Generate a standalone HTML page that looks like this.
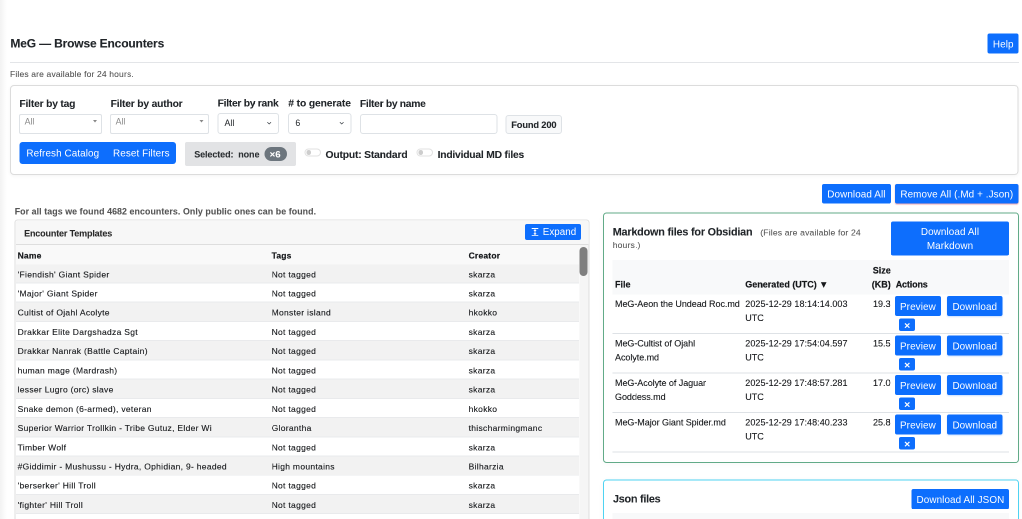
<!DOCTYPE html>
<html lang="en">
<head>
<meta charset="utf-8">
<title>MeG — Browse Encounters</title>
<style>
*{box-sizing:border-box;margin:0;padding:0}
html,body{width:1022px;height:519px;overflow:hidden;background:#fff}
body{position:relative;font-family:"Liberation Sans",Arial,sans-serif;color:#212529;font-size:18px;-webkit-font-smoothing:antialiased}
.abs{position:absolute}
.t{position:absolute;white-space:nowrap;line-height:1}
.b{font-weight:700;-webkit-text-stroke:0.16px}
.edge{left:0;top:0;width:14px;height:1038px;background:linear-gradient(to right,#f3f3f3 0,#f8f8f8 40%,#fdfdfd 80%,#fff 100%)}
.btn{position:absolute;background:#0d6efd;color:#fff;border-radius:4px;text-align:center;white-space:nowrap;font-size:19.8px;letter-spacing:0.18px;line-height:1}
.btn.sh{box-shadow:0 2px 3px rgba(13,110,253,.22)}
.btn span{position:absolute;left:0;right:0;white-space:nowrap}
h1{-webkit-text-stroke:0.2px #212529;font-size:24px;font-weight:700;left:20.8px;top:75px;letter-spacing:-0.32px}
.hr{left:20px;top:124px;width:2018px;height:2px;background:#e3e5e8}
.small{font-size:17px;color:#4e4e4e;-webkit-text-stroke:0.12px #4e4e4e;letter-spacing:0.32px}
.card{position:absolute;border:2px solid #dcdcdc;border-radius:8px;background:#fff}
.lbl{font-size:20.6px;font-weight:700;color:#212529;-webkit-text-stroke:0.12px #212529;letter-spacing:-0.38px}
.sel{position:absolute;border:2px solid #dee2e6;border-radius:4px;background:#fff;height:40px}
.sel .v{position:absolute;white-space:nowrap;line-height:1}
/* left table */
.lt{position:absolute;left:31.2px;top:489.8px;width:1127.2px}
.lt .r{position:relative;height:38.44px;border-bottom:2px solid #e9eaec}
.lt .r.h{height:38.8px;border-bottom:0;background:#f9f9f9;font-weight:700}
.lt .r.h span{top:13px;letter-spacing:0.4px;-webkit-text-stroke:0.4px #16181b}
.lt .r.o{background:#f2f2f2}
.lt .r span{position:absolute;top:12px;color:#16181b;-webkit-text-stroke:0.24px #16181b;line-height:1;white-space:nowrap;font-size:17px;letter-spacing:0.6px}
.lt .r .a{left:4px}.lt .r .c{left:512px}.lt .r .d{left:906px}
/* right table */
.rt{position:absolute;left:1225px;top:520px;width:793px}
.rt .h{position:relative;height:69px;background:#f8f9fa;font-weight:700}
.rt .h span.x{-webkit-text-stroke:0.36px #16181b}
.rt .r{position:relative;height:79.04px;border-bottom:2px solid #dee2e6}
.rt span.x{position:absolute;white-space:nowrap;line-height:1;font-size:18px;color:#16181b;-webkit-text-stroke:0.2px #16181b}
</style>
</head>
<body>
<div class="abs" style="left:0;top:0;width:2044px;height:1038px;will-change:transform;transform:scale(.5);transform-origin:0 0">
<div class="abs edge"></div>

<h1 class="t">MeG — Browse Encounters</h1>
<div class="btn" style="left:1975px;top:67px;width:62.4px;height:40px"><span style="top:11.6px;left:0.5px">Help</span></div>
<div class="abs hr"></div>
<div class="t small" style="left:20px;top:140px">Files are available for 24 hours.</div>

<!-- filter card -->
<div class="card" style="left:20px;top:170px;width:2017.2px;height:180px;box-shadow:0 2px 8px rgba(0,0,0,.05)"></div>
<div class="t lbl" style="left:38.8px;top:197.2px">Filter by tag</div>
<div class="t lbl" style="left:221.2px;top:197.2px">Filter by author</div>
<div class="t lbl" style="left:435.2px;top:196.4px;letter-spacing:-0.54px">Filter by rank</div>
<div class="t lbl" style="left:576.6px;top:196.4px;letter-spacing:-0.24px"># to generate</div>
<div class="t lbl" style="left:719.8px;top:197.2px;letter-spacing:-0.6px">Filter by name</div>

<div class="sel" style="left:38px;top:228px;width:166px;height:40px"><span class="v" style="left:9.2px;top:4.8px;font-size:17.6px;color:#8a8a8a">All</span><span class="abs" style="right:8.4px;top:9.8px;border:4px solid transparent;border-top:5px solid #888;width:0;height:0"></span></div>
<div class="sel" style="left:220px;top:228px;width:198px;height:40px"><span class="v" style="left:9.2px;top:4.8px;font-size:17.6px;color:#8a8a8a">All</span><span class="abs" style="right:8.8px;top:9.8px;border:4px solid transparent;border-top:5px solid #888;width:0;height:0"></span></div>
<div class="sel" style="left:434.6px;top:226px;width:123.2px;height:42px;border-radius:6px"><span class="v" style="left:12.4px;top:10.4px;font-size:17.6px;color:#212529">All</span>
<svg class="abs" style="right:13.2px;top:14.2px" width="8.8" height="8.8" viewBox="0 0 16 16"><path d="M2 5l6 6 6-6" fill="none" stroke="#343a40" stroke-width="2.4" stroke-linecap="round" stroke-linejoin="round"/></svg></div>
<div class="sel" style="left:576.4px;top:226px;width:126.4px;height:42px;border-radius:6px"><span class="v" style="left:12.4px;top:10.4px;font-size:17.6px;color:#212529">6</span>
<svg class="abs" style="right:13.2px;top:14.2px" width="8.8" height="8.8" viewBox="0 0 16 16"><path d="M2 5l6 6 6-6" fill="none" stroke="#343a40" stroke-width="2.4" stroke-linecap="round" stroke-linejoin="round"/></svg></div>
<div class="sel" style="left:719.6px;top:228px;width:275.6px;height:39.6px;border-radius:6px"></div>
<div class="abs" style="left:1011.4px;top:230px;width:112.4px;height:38px;border:2px solid #dee2e6;border-radius:6px;background:#f8f9fa"><span class="t b" style="left:9.2px;top:8.8px;font-size:18.6px;letter-spacing:-0.32px">Found 200</span></div>

<div class="btn" style="left:38.8px;top:284px;width:313.4px;height:44px;border-radius:6px;text-align:left"><span style="left:14px;top:12.6px">Refresh Catalog</span><span style="left:187.2px;top:12.6px">Reset Filters</span></div>
<div class="abs" style="left:370px;top:284px;width:222px;height:48px;background:#e2e3e5;border-radius:4px"></div>
<div class="t b" style="left:388.4px;top:299.8px;font-size:18px;letter-spacing:-0.18px;color:#2b2f32">Selected:&nbsp; none</div>
<div class="abs" style="left:528.8px;top:294.4px;width:45.2px;height:28px;border-radius:14px;background:#6c757d"></div>
<div class="t b" style="left:539.2px;top:298.8px;font-size:19.2px;color:#fff">×6</div>

<div class="abs" style="left:608.8px;top:296.8px;width:32.8px;height:16.6px;border:2px solid #e2e2e2;border-radius:8.4px;background:#fff"><span class="abs" style="left:2px;top:1.6px;width:9.2px;height:9.2px;border-radius:50%;background:#cdcdcd"></span></div>
<div class="t b" style="left:651px;top:299px;font-size:20.6px;letter-spacing:-0.34px">Output: Standard</div>
<div class="abs" style="left:833.2px;top:296.8px;width:32.8px;height:16.6px;border:2px solid #e2e2e2;border-radius:8.4px;background:#fff"><span class="abs" style="left:2px;top:1.6px;width:9.2px;height:9.2px;border-radius:50%;background:#cdcdcd"></span></div>
<div class="t b" style="left:875.2px;top:299px;font-size:20.6px;letter-spacing:-0.42px">Individual MD files</div>

<div class="btn" style="left:1644px;top:368px;width:137.6px;height:39.2px"><span style="top:11.4px">Download All</span></div>
<div class="btn" style="left:1790px;top:368px;width:247.2px;height:39.2px;box-shadow:0 1.2px 2.4px rgba(220,53,69,.45)"><span style="top:11.4px">Remove All (.Md + .Json)</span></div>

<!-- left panel -->
<div class="t b" style="left:29.4px;top:415.2px;font-size:17.6px;letter-spacing:0.18px;color:#555">For all tags we found 4682 encounters. Only public ones can be found.</div>
<div class="card" style="left:29.2px;top:438.8px;width:1150px;height:640px;border-color:#dedede;border-radius:6px;background:#fff"></div>
<div class="abs" style="left:31.2px;top:440.8px;width:1146px;height:49px;background:#f7f7f7;border-bottom:2px solid #dedede;border-radius:6px 6px 0 0"></div>
<div class="t b" style="left:48.2px;top:458px;font-size:18px;letter-spacing:-0.3px;color:#2a2a2a">Encounter Templates</div>
<div class="btn" style="left:1050px;top:448px;width:112px;height:32.4px;text-align:left"><svg class="abs" style="left:13px;top:8px" width="14" height="16.4" viewBox="0 0 7 8.2"><path d="M0.2 0.5H6.8M0.2 7.7H6.8M3.5 1.4V6.8" stroke="#fff" stroke-width="0.9" fill="none"/><path d="M3.5 1.1L5.1 3H1.9ZM3.5 7.1L5.1 5.2H1.9Z" fill="#fff"/></svg><span style="left:35.6px;top:6.2px;font-size:19.6px;letter-spacing:0.06px">Expand</span></div>

<div class="abs" style="left:1158.4px;top:490px;width:18.8px;height:560px;background:#f5f5f5;border-left:2px solid #f9f9f9"></div>
<div class="abs" style="left:1158.6px;top:493.6px;width:16px;height:58.8px;border-radius:8px;background:#7f7f7f"></div>

<div class="lt">
<div class="r h"><span class="a">Name</span><span class="c">Tags</span><span class="d">Creator</span></div>
<div class="r o f"><span class="a">'Fiendish' Giant Spider</span><span class="c">Not tagged</span><span class="d">skarza</span></div>
<div class="r"><span class="a">'Major' Giant Spider</span><span class="c">Not tagged</span><span class="d">skarza</span></div>
<div class="r o"><span class="a">Cultist of Ojahl Acolyte</span><span class="c">Monster island</span><span class="d">hkokko</span></div>
<div class="r"><span class="a">Drakkar Elite Dargshadza Sgt</span><span class="c">Not tagged</span><span class="d">skarza</span></div>
<div class="r o"><span class="a">Drakkar Nanrak (Battle Captain)</span><span class="c">Not tagged</span><span class="d">skarza</span></div>
<div class="r"><span class="a">human mage (Mardrash)</span><span class="c">Not tagged</span><span class="d">skarza</span></div>
<div class="r o"><span class="a">lesser Lugro (orc) slave</span><span class="c">Not tagged</span><span class="d">skarza</span></div>
<div class="r"><span class="a">Snake demon (6-armed), veteran</span><span class="c">Not tagged</span><span class="d">hkokko</span></div>
<div class="r o"><span class="a">Superior Warrior Trollkin - Tribe Gutuz, Elder Wi</span><span class="c">Glorantha</span><span class="d">thischarmingmanc</span></div>
<div class="r"><span class="a">Timber Wolf</span><span class="c">Not tagged</span><span class="d">skarza</span></div>
<div class="r o"><span class="a">#Giddimir - Mushussu - Hydra, Ophidian, 9- headed</span><span class="c">High mountains</span><span class="d">Bilharzia</span></div>
<div class="r"><span class="a">'berserker' Hill Troll</span><span class="c">Not tagged</span><span class="d">skarza</span></div>
<div class="r o"><span class="a">'fighter' Hill Troll</span><span class="c">Not tagged</span><span class="d">skarza</span></div>
<div class="r"></div>
</div>

<!-- right: markdown card -->
<div class="card" style="left:1206px;top:424.6px;width:832px;height:501.4px;border-color:#62ab88;border-radius:7px;box-shadow:0 2px 14px rgba(0,0,0,.035)"></div>
<div class="t b" style="left:1225.4px;top:453.2px;font-size:21.6px;letter-spacing:-0.36px">Markdown files for Obsidian</div>
<div class="t small" style="left:1520.6px;top:457.2px;font-size:17.2px;letter-spacing:0.3px;color:#555">(Files are available for 24</div>
<div class="t small" style="left:1225.4px;top:482.2px;font-size:17.2px;letter-spacing:0.3px;color:#555">hours.)</div>
<div class="btn" style="left:1781.6px;top:443.2px;width:236.8px;height:68px;border-radius:4px"><span style="top:11.2px">Download All</span><span style="top:39.2px">Markdown</span></div>

<div class="rt">
<div class="h">
<span class="x" style="left:5px;top:40.4px">File</span>
<span class="x" style="left:265.6px;top:40.4px">Generated (UTC) ▼</span>
<span class="x" style="left:520.4px;top:11.8px">Size</span>
<span class="x" style="left:518.6px;top:40.4px">(KB)</span>
<span class="x" style="left:566.4px;top:40.4px;letter-spacing:-0.3px">Actions</span>
</div>
<div class="r">
<span class="x" style="left:5px;top:10.2px;letter-spacing:-0.1px">MeG-Aeon the Undead Roc.md</span>
<span class="x" style="left:265.6px;top:10.2px;letter-spacing:0.1px">2025-12-29 18:14:14.003</span><span class="x" style="left:265.6px;top:38.2px">UTC</span>
<span class="x" style="right:237px;top:10.2px">19.3</span>
<div class="btn" style="left:565px;top:3.2px;width:91.6px;height:40px"><span style="top:11.4px">Preview</span></div>
<div class="btn sh" style="left:669.4px;top:3.2px;width:110.4px;height:40px"><span style="top:11.4px">Download</span></div>
<div class="btn" style="left:573.4px;top:47.6px;width:32px;height:25.2px;font-size:21px;font-weight:700"><span style="top:3.2px">×</span></div>
</div>
<div class="r">
<span class="x" style="left:5px;top:10.2px;letter-spacing:-0.1px">MeG-Cultist of Ojahl</span><span class="x" style="left:5px;top:38.2px;letter-spacing:-0.1px">Acolyte.md</span>
<span class="x" style="left:265.6px;top:10.2px;letter-spacing:0.1px">2025-12-29 17:54:04.597</span><span class="x" style="left:265.6px;top:38.2px">UTC</span>
<span class="x" style="right:237px;top:10.2px">15.5</span>
<div class="btn" style="left:565px;top:3.2px;width:91.6px;height:40px"><span style="top:11.4px">Preview</span></div>
<div class="btn sh" style="left:669.4px;top:3.2px;width:110.4px;height:40px"><span style="top:11.4px">Download</span></div>
<div class="btn" style="left:573.4px;top:47.6px;width:32px;height:25.2px;font-size:21px;font-weight:700"><span style="top:3.2px">×</span></div>
</div>
<div class="r">
<span class="x" style="left:5px;top:10.2px;letter-spacing:-0.1px">MeG-Acolyte of Jaguar</span><span class="x" style="left:5px;top:38.2px;letter-spacing:-0.1px">Goddess.md</span>
<span class="x" style="left:265.6px;top:10.2px;letter-spacing:0.1px">2025-12-29 17:48:57.281</span><span class="x" style="left:265.6px;top:38.2px">UTC</span>
<span class="x" style="right:237px;top:10.2px">17.0</span>
<div class="btn" style="left:565px;top:3.2px;width:91.6px;height:40px"><span style="top:11.4px">Preview</span></div>
<div class="btn sh" style="left:669.4px;top:3.2px;width:110.4px;height:40px"><span style="top:11.4px">Download</span></div>
<div class="btn" style="left:573.4px;top:47.6px;width:32px;height:25.2px;font-size:21px;font-weight:700"><span style="top:3.2px">×</span></div>
</div>
<div class="r">
<span class="x" style="left:5px;top:10.2px;letter-spacing:-0.1px">MeG-Major Giant Spider.md</span>
<span class="x" style="left:265.6px;top:10.2px;letter-spacing:0.1px">2025-12-29 17:48:40.233</span><span class="x" style="left:265.6px;top:38.2px">UTC</span>
<span class="x" style="right:237px;top:10.2px">25.8</span>
<div class="btn" style="left:565px;top:3.2px;width:91.6px;height:40px"><span style="top:11.4px">Preview</span></div>
<div class="btn sh" style="left:669.4px;top:3.2px;width:110.4px;height:40px"><span style="top:11.4px">Download</span></div>
<div class="btn" style="left:573.4px;top:47.6px;width:32px;height:25.2px;font-size:21px;font-weight:700"><span style="top:3.2px">×</span></div>
</div>
</div>

<!-- right: json card -->
<div class="card" style="left:1206px;top:959.4px;width:832px;height:160px;border-color:#4fd3f2;border-radius:7px;box-shadow:0 2px 14px rgba(0,0,0,.035)"></div>
<div class="t b" style="left:1226px;top:987.2px;font-size:21.6px;letter-spacing:-0.48px">Json files</div>
<div class="btn" style="left:1823.4px;top:978.4px;width:195px;height:40px"><span style="top:11.8px">Download All JSON</span></div>
<div class="abs" style="left:1225px;top:1026px;width:793px;height:20px;background:#f8f9fa"></div>

</div>
</body>
</html>
